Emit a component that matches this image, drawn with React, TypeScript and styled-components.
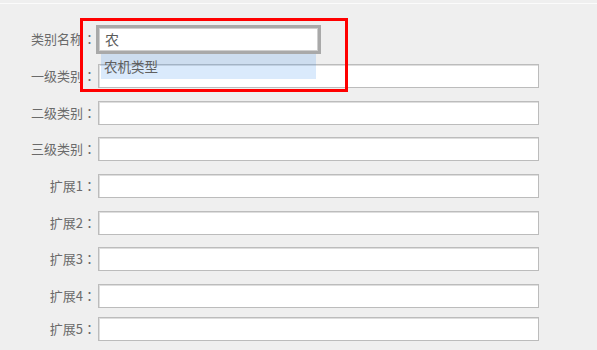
import styled, { createGlobalStyle } from 'styled-components';

const GlobalStyle = createGlobalStyle`
  html, body {
    margin: 0;
    padding: 0;
    background: #efefef;
  }
  body {
    font-family: "Noto Sans CJK SC", "Liberation Sans", sans-serif;
    font-size: 13px;
    color: #666;
  }
`;

const TopRule = styled.div`
  height: 3px;
  border-bottom: 1px solid #fbfbfb;
`;

const Form = styled.form`
  display: flex;
  flex-direction: column;
  padding-top: 23.33px;
`;

const Row = styled.div<{ $gap: number }>`
  display: flex;
  align-items: center;
  height: 24px;
  margin-bottom: ${p => p.$gap}px;
`;

const Label = styled.label`
  width: 96px;
  margin-right: 2px;
  text-align: right;
  line-height: 24px;
  white-space: nowrap;
  color: #6a6a6a;
`;

const Colon = styled.span`
  font-family: "Noto Sans CJK TC", sans-serif;
`;

const TextInput = styled.input`
  box-sizing: border-box;
  width: 441px;
  height: 24px;
  margin: 0;
  padding: 0 5px;
  border: 1px solid #bcbcbc;
  box-shadow: inset 1px 1px 0 #dedede;
  background: #fff;
  font-family: inherit;
  font-size: 13px;
  color: #555;
  outline: none;
`;

const Field = styled.div`
  position: relative;
  margin-left: -2px;
`;

const SearchInput = styled.input`
  box-sizing: border-box;
  display: block;
  width: 225px;
  height: 29px;
  margin: 0;
  padding: 0 6px;
  border: 3px solid #a9a9a9;
  box-shadow: 0 0 0 1px #cfcfcf inset;
  background: #fff;
  font-family: inherit;
  font-size: 14px;
  color: #5a5a5a;
  outline: none;
`;

const Suggestions = styled.ul`
  position: absolute;
  left: 5px;
  top: 29px;
  width: 215px;
  margin: 0;
  padding: 0;
  list-style: none;
  background: rgba(51, 136, 238, 0.18);
`;

const Suggestion = styled.li`
  height: 25px;
  line-height: 25px;
  padding-left: 3px;
  font-size: 13.5px;
  color: #606060;
`;

const Highlight = styled.div`
  position: absolute;
  left: -16px;
  top: -7px;
  width: 268px;
  height: 74px;
  box-sizing: border-box;
  border: 3px solid #ff0000;
  pointer-events: none;
`;

const fields = [
  { label: '一级类别', gap: 12.67 },
  { label: '二级类别', gap: 12.67 },
  { label: '三级类别', gap: 12.67 },
  { label: '扩展1', gap: 12.67 },
  { label: '扩展2', gap: 12.67 },
  { label: '扩展3', gap: 12.67 },
  { label: '扩展4', gap: 9 },
  { label: '扩展5', gap: 0 },
];

export default function App() {
  return (
    <>
      <GlobalStyle />
      <TopRule />
      <Form>
        <Row $gap={12.67} style={{ position: 'relative', zIndex: 2 }}>
          <Label>类别名称<Colon>：</Colon></Label>
          <Field>
            <SearchInput defaultValue="农" />
            <Suggestions>
              <Suggestion>农机类型</Suggestion>
            </Suggestions>
            <Highlight />
          </Field>
        </Row>
        {fields.map(f => (
          <Row key={f.label} $gap={f.gap}>
            <Label>{f.label}<Colon>：</Colon></Label>
            <TextInput />
          </Row>
        ))}
      </Form>
    </>
  );
}
